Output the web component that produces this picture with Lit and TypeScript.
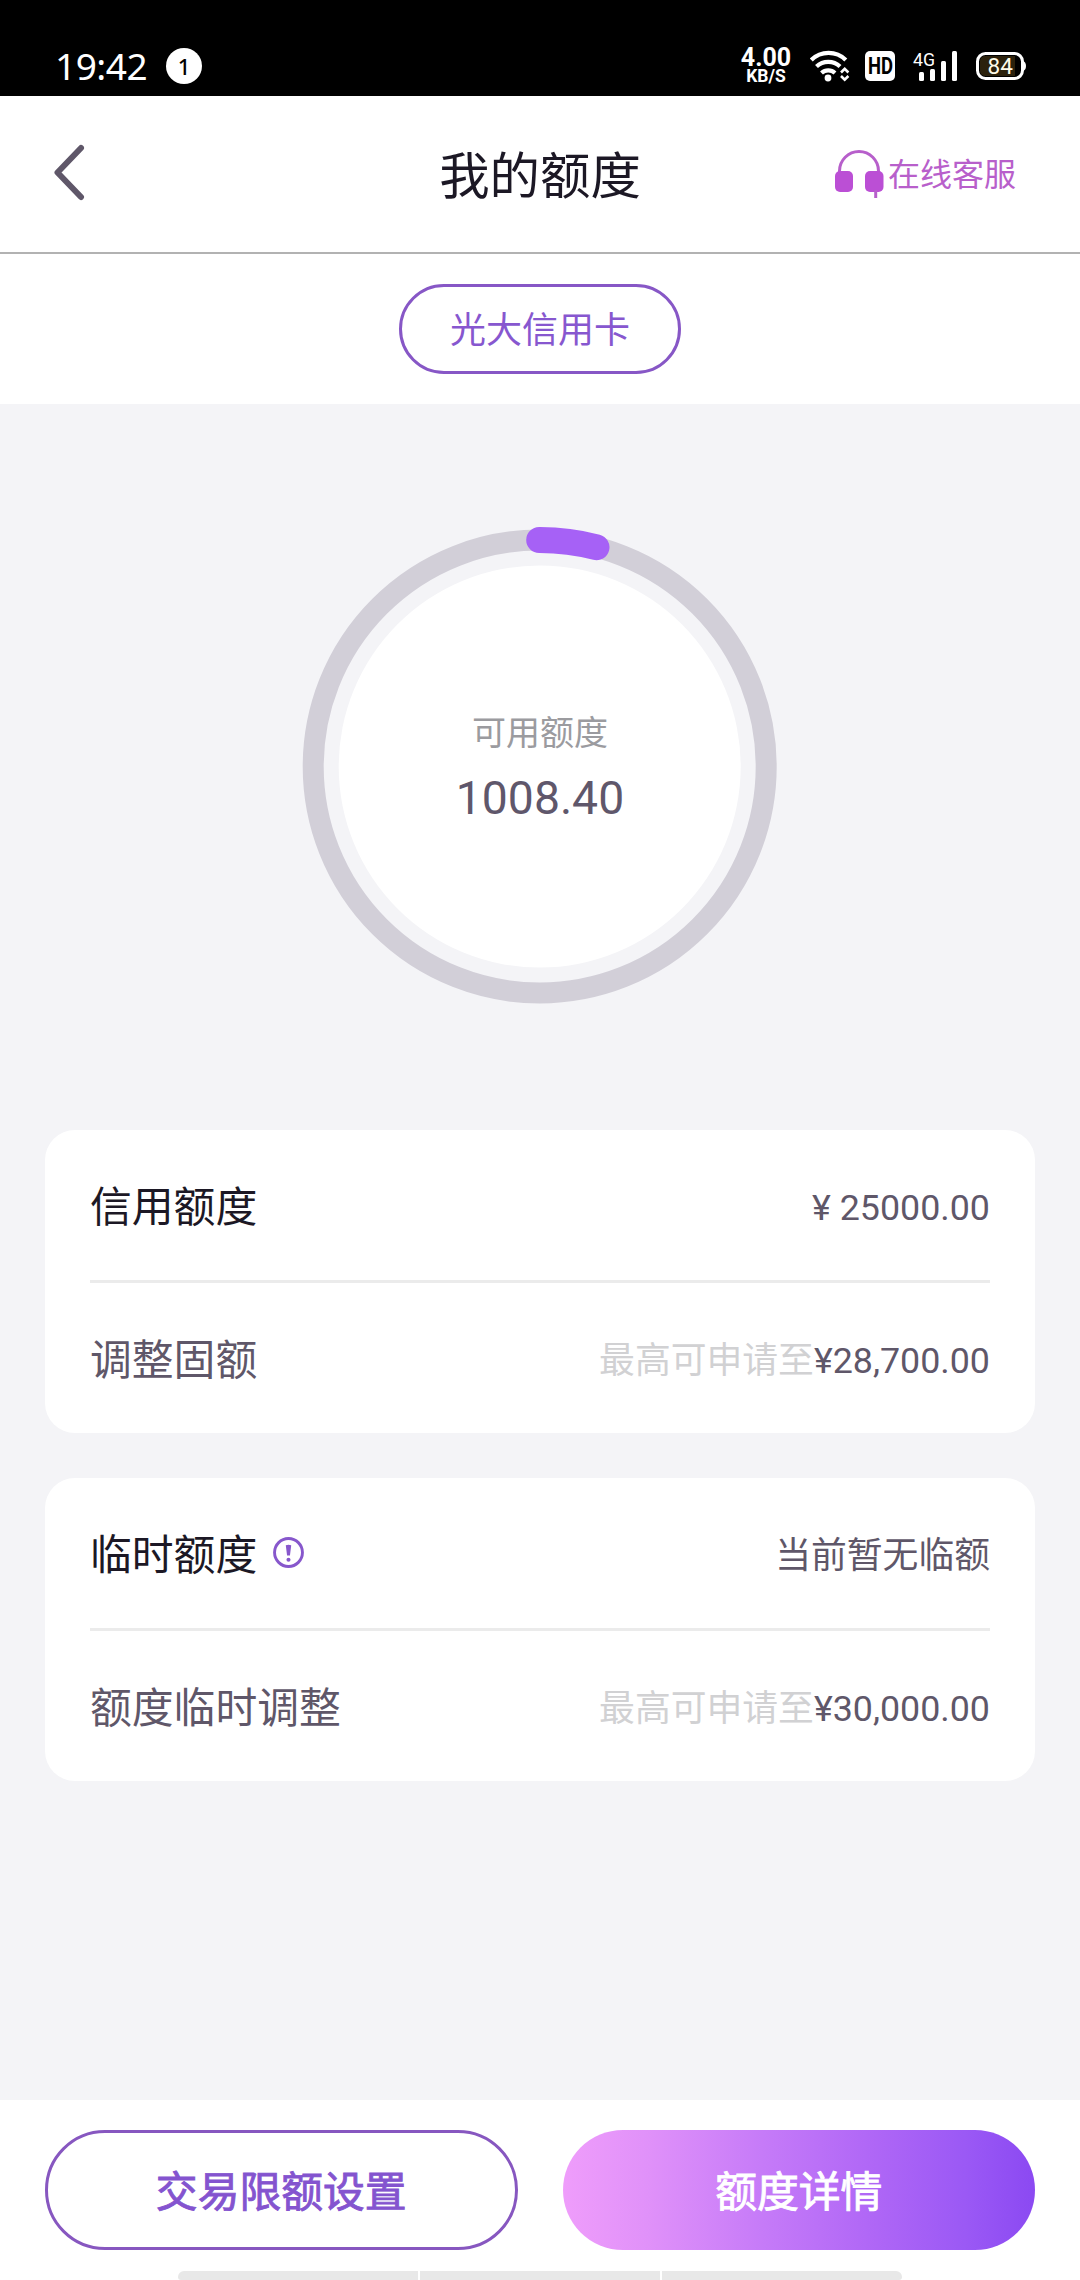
import { LitElement, html, css, svg } from "lit";
import { customElement, property } from "lit/decorators.js";

const FONT = css`Roboto, "Noto Sans CJK SC", sans-serif`;

@customElement("status-bar")
class StatusBar extends LitElement {
  static styles = css`
    :host { display: flex; box-sizing: border-box; height: 96px; padding: 36px 54px 0 55px; background: #000; color: #fff; align-items: center; font-family: ${FONT}; }
    .time { font: 37px/60px "Noto Sans", sans-serif; width: 111px; letter-spacing: -0.5px; }
    .badge { width: 36px; height: 36px; border-radius: 50%; background: #fff; color: #000; font: 500 22px/36px "Noto Sans", sans-serif; text-align: center; }
    .speed { margin-left: auto; width: 52px; display: flex; flex-direction: column; align-items: center; font-weight: 700; margin-top: -1px; }
    .rate { font-size: 25px; line-height: 21px; }
    .unit { font-size: 17.500px; line-height: 17px; }
    .icons { display: block; margin-left: 18px; }
    .hd { font: 700 23px Roboto, sans-serif; }
    .net { font: 19px Roboto, sans-serif; }
    .pct { font: 22.500px Roboto, sans-serif; }
  `;
  render() {
    return html`
      <span class="time">19:42</span>
      <span class="badge">1</span>
      <div class="speed"><span class="rate">4.00</span><span class="unit">KB/S</span></div>
      <svg class="icons" width="216" height="40" viewBox="810 46 216 40">
        <g fill="none" stroke="#fff" stroke-width="4.200">
          <path d="M811.300 60a24.500 24.500 0 0 1 34.500 0" />
          <path d="M816.500 66.500a17 17 0 0 1 23.500 0" />
          <path d="M821.500 73a10 10 0 0 1 13.500 0" />
        </g>
        <circle cx="828" cy="78" r="3.400" fill="#fff" />
        <path d="M841 72.500l3.700-3.700 3.700 3.700M841 76l3.700 3.700 3.700-3.700" fill="none" stroke="#fff" stroke-width="2.600" />
        <rect x="865" y="51" width="30" height="30" rx="5" fill="#fff" />
        <text class="hd" x="868" y="74" textLength="25" lengthAdjust="spacingAndGlyphs" fill="#000">HD</text>
        <text class="net" x="913" y="66" textLength="22" lengthAdjust="spacingAndGlyphs" fill="#fff">4G</text>
        <g fill="#fff">
          <rect x="919" y="72" width="5" height="9" rx="1.500" />
          <rect x="930" y="69" width="5" height="12" rx="1.500" />
          <rect x="941" y="61" width="5" height="20" rx="1.500" />
          <rect x="952" y="51" width="5" height="30" rx="1.500" />
        </g>
        <rect x="977.500" y="53.500" width="45" height="25" rx="8" fill="#000" stroke="#fff" stroke-width="3" />
        <path d="M985 56h30v20h-30a5 5 0 0 1-5-5v-10a5 5 0 0 1 5-5z" fill="#2b210c" />
        <path d="M1023 61q3 1 3 5t-3 5z" fill="#fff" />
        <text class="pct" x="987.500" y="74" fill="#fffbe8">84</text>
      </svg>`;
  }
}

@customElement("limit-ring")
class LimitRing extends LitElement {
  @property({ type: Number }) available = 0;
  @property({ type: Number }) total = 1;
  static styles = css`
    :host { display: grid; width: 480px; height: 480px; font-family: ${FONT}; }
    .ring, .inner { grid-area: 1 / 1; }
    .inner { display: flex; flex-direction: column; align-items: center; padding-top: 181px; }
    .label { font-size: 34px; line-height: 50px; color: #9b9b9f; }
    .value { font-size: 46.300px; line-height: 60px; color: #5f576b; margin-top: 10px; }
  `;
  render() {
    const r = 226.5;
    const angle = (this.available / this.total) * Math.PI * 2;
    const x = 240 + r * Math.sin(angle);
    const y = 240 - r * Math.cos(angle);
    return html`
      <svg class="ring" width="480" height="480" viewBox="0.300 0.500 480 480">
        <circle cx="240" cy="240" r="226.500" fill="none" stroke="#d2cfd8" stroke-width="21" />
        <circle cx="240" cy="240" r="201" fill="#fff" />
        ${svg`<path d="M239.500 ${240 - r}A${r} ${r} 0 0 1 ${x} ${y}" fill="none" stroke="#a661f6" stroke-width="26" stroke-linecap="round" />`}
      </svg>
      <div class="inner">
        <span class="label">可用额度</span>
        <span class="value">${this.available.toFixed(2)}</span>
      </div>`;
  }
}

interface Row { label: string; hint?: string; value: string; info?: boolean; }

@customElement("limit-card")
class LimitCard extends LitElement {
  @property({ attribute: false }) rows: Row[] = [];
  static styles = css`
    :host { display: block; background: #fff; border-radius: 30px; padding: 0 45px; font-family: ${FONT}; color: #5f5769; }
    .row { display: flex; align-items: center; height: 150px; box-sizing: border-box; padding-top: 5px; }
    .row + .row { border-top: 3px solid #ebebeb; height: 153px; }
    .label { font-size: 41.800px; line-height: 60px; }
    .row:first-child .label { color: #1c1825; }
    .info { margin-left: 16px; margin-top: -6px; }
    .right { margin-left: auto; font-size: 35.800px; line-height: 54px; white-space: pre; }
    .hint { color: #d1d1d3; }
  `;
  render() {
    return this.rows.map((r) => html`
      <div class="row">
        <span class="label">${r.label}</span>
        ${r.info ? html`<svg class="info" width="31" height="31" viewBox="0 0 32 32">
          <circle cx="16" cy="16" r="14.400" fill="none" stroke="#8757cc" stroke-width="3" />
          <path d="M13.200 8.500q2.800-1.200 5.600 0l-1.300 10.500h-3z" fill="#8757cc" />
          <circle cx="16" cy="23.500" r="2.100" fill="#8757cc" />
        </svg>` : null}
        <span class="right"><span class="hint">${r.hint ?? ""}</span>${r.value}</span>
      </div>`);
  }
}

@customElement("app-root")
class AppRoot extends LitElement {
  static styles = css`
    :host { display: flex; flex-direction: column; width: 1080px; height: 2280px; overflow: hidden; background: #f4f4f7; font-family: ${FONT}; }
    .header { box-sizing: border-box; height: 158px; background: #fff; border-bottom: 2px solid #b2b2b2; display: grid; grid-template-columns: 1fr auto 1fr; align-items: center; padding: 0 64px 0 51px; }
    .back { display: block; margin-top: -4px; }
    .title { font-size: 50.400px; line-height: 72px; color: #1c1825; padding: 5px 0 0 13px; }
    .service { display: flex; align-items: center; justify-content: flex-end; gap: 4px; color: #b85fcb; font-size: 32px; line-height: 48px; }
    .service-label { padding-top: 2px; }
    .tabs { background: #fff; height: 150px; display: flex; align-items: center; justify-content: center; }
    .tab { box-sizing: border-box; width: 282px; height: 90px; border: 3px solid #8757c6; border-radius: 45px; color: #8757cf; font-size: 36px; line-height: 89px; text-align: center; }
    .main { flex: 1; display: flex; flex-direction: column; gap: 45px; padding: 123px 45px 0; }
    .ring { align-self: center; margin-bottom: 78px; }
    .footer { background: #fff; height: 180px; display: flex; flex-direction: column; justify-content: space-between; }
    .buttons { display: grid; grid-template-columns: 1fr 1fr; gap: 45px; padding: 30px 45px 0; }
    .button { box-sizing: border-box; height: 120px; border-radius: 60px; font-size: 41.800px; line-height: 125px; text-align: center; -webkit-text-stroke: 0.900px currentColor; }
    .outline { border: 3px solid #8757c0; color: #8454cf; line-height: 119px; }
    .solid { color: #fff; background: linear-gradient(90deg, #ef9dfb 0%, #e091f9 18%, #c57af8 43%, #b067f6 65%, #9b59f5 85%, #8b49f2 100%); }
    .handle { align-self: center; width: 724px; height: 9px; display: flex; gap: 2px; overflow: hidden; border-radius: 6px 6px 3px 3px; }
    .segment { flex: 1; background: #e8e8e8; }
  `;
  render() {
    const fixed: Row[] = [
      { label: "信用额度", value: "¥ 25000.00" },
      { label: "调整固额", hint: "最高可申请至", value: "¥28,700.00" },
    ];
    const temporary: Row[] = [
      { label: "临时额度", value: "当前暂无临额", info: true },
      { label: "额度临时调整", hint: "最高可申请至", value: "¥30,000.00" },
    ];
    return html`
      <status-bar></status-bar>
      <header class="header">
        <svg class="back" width="36" height="58" viewBox="0 0 36 58">
          <path d="M30 5L6.500 29.500L30 54" fill="none" stroke="#5f5769" stroke-width="6" stroke-linecap="round" stroke-linejoin="round" />
        </svg>
        <span class="title">我的额度</span>
        <div class="service">
          <svg width="50" height="50" viewBox="834 149 50 50">
            <path d="M839.500 172v-1a19.500 19.500 0 0 1 39 0v1" fill="none" stroke="#b75fcb" stroke-width="3" />
            <rect x="835" y="171" width="18" height="21" rx="5" fill="#bb4fd5" />
            <rect x="865" y="171" width="18.500" height="21" rx="5" fill="#bb4fd5" />
            <path d="M875.700 190v8" stroke="#b75fcb" stroke-width="3" />
          </svg>
          <span class="service-label">在线客服</span>
        </div>
      </header>
      <div class="tabs"><span class="tab">光大信用卡</span></div>
      <main class="main">
        <limit-ring class="ring" .available=${1008.4} .total=${25000}></limit-ring>
        <limit-card .rows=${fixed}></limit-card>
        <limit-card .rows=${temporary}></limit-card>
      </main>
      <footer class="footer">
        <div class="buttons">
          <span class="button outline">交易限额设置</span>
          <span class="button solid">额度详情</span>
        </div>
        <div class="handle"><i class="segment"></i><i class="segment"></i><i class="segment"></i></div>
      </footer>`;
  }
}
